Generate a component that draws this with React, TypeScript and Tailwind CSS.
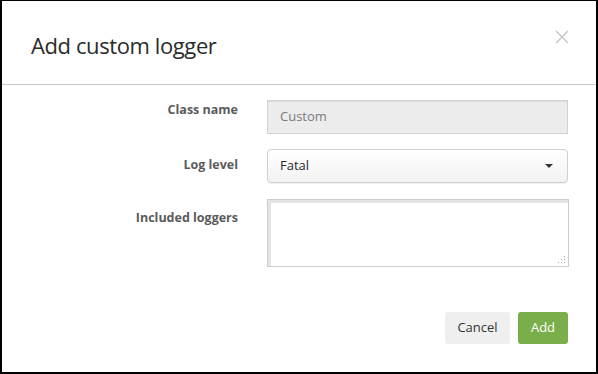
import { useState } from 'react';

const FONT = "font-['Open_Sans','Liberation_Sans',sans-serif]";

function Label({ text, offset }: { text: string; offset: string }) {
    return (
        <div className={`w-[236px] shrink-0 text-right text-[12.5px] leading-[18px] font-bold text-[#5b5b5b] ${offset}`}>
            {text}
        </div>
    );
}

export default function App() {
    const [level] = useState('Fatal');

    return (
        <div className={`${FONT} w-[598px] h-[374px] bg-white border-t border-l-2 border-r-2 border-b-2 border-black flex flex-col`}>
            <header className="h-[84px] shrink-0 flex items-start justify-between pl-[29px] pr-[26px] border-b border-[#c9c9c9]">
                <h2 className="mt-[29px] text-[22px] leading-[30px] text-[#2b2b2b] tracking-[-0.4px]">
                    Add custom logger
                </h2>
                <button className="mt-[28px] w-[16px] h-[16px] flex items-center justify-center text-[#c4c4c4]" aria-label="Close">
                    <svg viewBox="0 0 14 14" className="w-[14px] h-[14px]" fill="none" stroke="currentColor" strokeWidth="1.4">
                        <path d="M1 1l12 12M13 1L1 13" />
                    </svg>
                </button>
            </header>

            <div className="flex flex-col pt-[15px]">
                <div className="flex items-start gap-[29px]">
                    <Label text="Class name" offset="pt-[1px]" />
                    <div className="w-[301px] h-[34px] flex items-center px-[12px] bg-[#ececec] border border-[#d2d2d2] shadow-[inset_0_1px_0_#dcdcdc] text-[13px] text-[#7a7a7a]">
                        Custom
                    </div>
                </div>

                <div className="flex items-start gap-[29px] mt-[15px]">
                    <Label text="Log level" offset="pt-[7px]" />
                    <div className="relative w-[301px] h-[34px] flex items-center justify-between pl-[12px] pr-[14px] rounded-[4px] border border-[#d0d0d0] bg-gradient-to-b from-white to-[#f2f2f2] shadow-[0_1px_1px_rgba(0,0,0,0.06)] text-[13px] text-[#2a2a2a]">
                        <span>{level}</span>
                        <svg viewBox="0 0 8 4" className="w-[8px] h-[4px]" fill="#333">
                            <path d="M0 0h8L4 4z" />
                        </svg>
                    </div>
                </div>

                <div className="flex items-start gap-[29px] mt-[16px]">
                    <Label text="Included loggers" offset="pt-[10px]" />
                    <div className="relative w-[302px] h-[68px]">
                        <textarea className="w-full h-full resize-none border border-[#cdcdcd] shadow-[inset_3px_3px_0_#e4e4e4] outline-none bg-white" />
                        <svg viewBox="0 0 8 8" className="absolute right-[3px] bottom-[3px] w-[8px] h-[8px]" fill="#a8a8a8">
                            <rect x="6" y="0" width="1" height="1" />
                            <rect x="3" y="3" width="1" height="1" />
                            <rect x="6" y="3" width="1" height="1" />
                            <rect x="0" y="6" width="1" height="1" />
                            <rect x="3" y="6" width="1" height="1" />
                            <rect x="6" y="6" width="1" height="1" />
                        </svg>
                    </div>
                </div>
            </div>

            <div className="flex justify-end gap-[8px] pr-[28px] mt-[45px]">
                <button className="w-[65px] h-[32px] rounded-[3px] bg-[#efefef] text-[13px] text-[#333]">
                    Cancel
                </button>
                <button className="w-[50px] h-[32px] rounded-[3px] bg-[#7aae4b] text-[13px] text-white">
                    Add
                </button>
            </div>
        </div>
    );
}
